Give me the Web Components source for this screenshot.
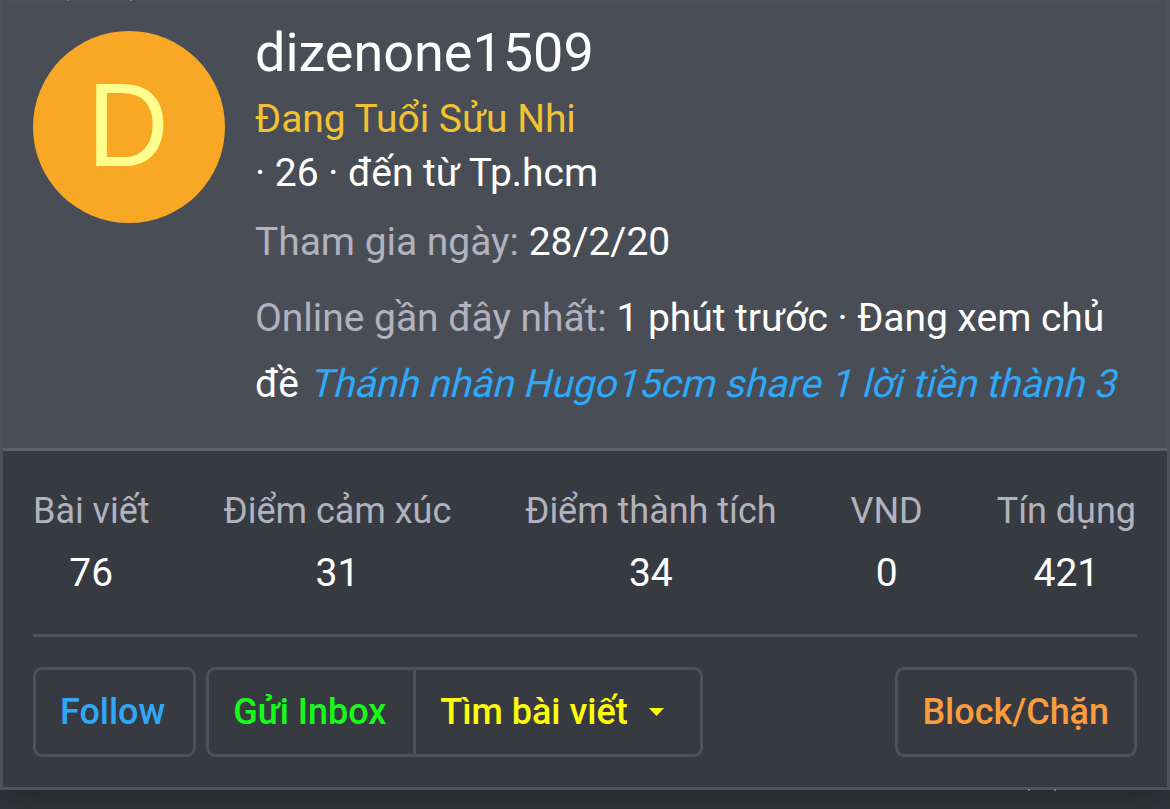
<!DOCTYPE html>
<html lang="vi">
<head>
<meta charset="UTF-8">
<title>dizenone1509</title>
<style>
  body {
    margin: 0;
    height: 809px;
    overflow: hidden;
    background: #33363b;
    font-family: Roboto, "Noto Sans", sans-serif;
    letter-spacing: -0.03px;
    color: #fff;
  }
</style>
</head>
<body>

<member-tooltip>
  <member-header slot="header" name="dizenone1509" initial="D">
    <span slot="title">Đang Tuổi Sửu Nhi</span>
    <span slot="blurb">· 26 · đến từ Tp.hcm</span>
    <member-line label="Tham gia ngày:">28/2/20</member-line>
    <member-line label="Online gần đây nhất:">1 phút trước · Đang xem chủ đề <topic-link>Thánh nhân Hugo15cm share 1 lời tiền thành 3</topic-link></member-line>
  </member-header>
  <member-stat slot="stats" label="Bài viết">76</member-stat>
  <member-stat slot="stats" label="Điểm cảm xúc">31</member-stat>
  <member-stat slot="stats" label="Điểm thành tích">34</member-stat>
  <member-stat slot="stats" label="VND">0</member-stat>
  <member-stat slot="stats" label="Tín dụng">421</member-stat>
  <action-group slot="actions">
    <action-button color="#2fa8f8" pad="28">Follow</action-button>
  </action-group>
  <action-group slot="actions">
    <action-button color="#17fb1b" pad="27">Gửi Inbox</action-button>
    <action-button color="#fdfd08" pad="25" menu>Tìm bài viết</action-button>
  </action-group>
  <action-group slot="actions" class="end">
    <action-button color="#fd9c3d" pad="25">Block/Chặn</action-button>
  </action-group>
</member-tooltip>

<script>
  class MemberTooltip extends HTMLElement {
    constructor() {
      super();
      this.attachShadow({ mode: 'open' }).innerHTML = `
        <style>
          :host {
            display: flex;
            flex-direction: column;
            position: relative;
            box-sizing: border-box;
            height: 790px;
            border: 3px solid #4e5159;
            border-top-width: 1px;
            background: #383a42;
            box-shadow: 0 15px 30px -4px rgba(30, 38, 36, 0.75);
          }
          .stats {
            display: flex;
            justify-content: space-between;
            height: 186px;
            box-sizing: border-box;
            padding-top: 39px;
            margin: 0 31px 0 30px;
          }
          .rule {
            height: 3px;
            margin: -3px 30px 0;
            background: #4e5159;
          }
          .actions {
            display: flex;
            gap: 10px;
            margin: 30px 30px 0;
          }
          ::slotted(.end) {
            margin-left: auto;
          }
          /* tips of the page text hidden behind the card */
          .peek {
            position: absolute;
            width: 2px;
            height: 2px;
            background: #74777b;
          }
          .peek.top {
            top: -1px;
            height: 1px;
          }
          .peek.bottom {
            bottom: -4px;
          }
        </style>
        <slot name="header"></slot>
        <div class="stats"><slot name="stats"></slot></div>
        <div class="rule"></div>
        <div class="actions"><slot name="actions"></slot></div>
        <i class="peek top" style="left: 64px"></i>
        <i class="peek top" style="left: 127px"></i>
        <i class="peek bottom" style="left: 1025px"></i>
        <i class="peek bottom" style="left: 1051px"></i>
      `;
    }
  }

  class MemberHeader extends HTMLElement {
    constructor() {
      super();
      this.attachShadow({ mode: 'open' }).innerHTML = `
        <style>
          :host {
            display: flex;
            gap: 30px;
            box-sizing: border-box;
            height: 450px;
            padding: 30px 30px 0;
            background: #494d55;
            border-bottom: 3px solid #5d6069;
          }
          .avatar {
            flex: none;
            width: 192px;
            height: 192px;
            border-radius: 50%;
            background: #f9a825;
            color: #ffff8d;
            font: 118.5px/188px "Liberation Sans", sans-serif;
            text-align: center;
          }
          .avatar span {
            display: inline-block;
            margin-right: 2px;
            transform: scaleX(0.955);
          }
          .info {
            flex: 1;
            min-width: 0;
            font-size: 39px;
            line-height: 54px;
          }
          .name {
            font-size: 54px;
            line-height: 43px;
            margin-bottom: 18px;
          }
          .title {
            color: #f1c232;
          }
          .blurb {
            margin-bottom: 9px;
          }
        </style>
        <div class="avatar"><span>${this.getAttribute('initial')}</span></div>
        <div class="info">
          <div class="name">${this.getAttribute('name')}</div>
          <div class="title"><slot name="title"></slot></div>
          <div class="blurb"><slot name="blurb"></slot></div>
          <slot></slot>
        </div>
      `;
    }
  }

  class MemberLine extends HTMLElement {
    constructor() {
      super();
      this.attachShadow({ mode: 'open' }).innerHTML = `
        <style>
          :host {
            display: block;
            line-height: 66px;
            margin-bottom: 10px;
          }
          .label {
            color: #b0b3bd;
          }
        </style>
        <span class="label">${this.getAttribute('label')}</span>
        <slot></slot>
      `;
    }
  }

  class TopicLink extends HTMLElement {
    constructor() {
      super();
      // slanted upright face, keeps the regular advance widths
      this.attachShadow({ mode: 'open' }).innerHTML = `
        <style>
          :host {
            display: inline-block;
            color: #2fa8f8;
            letter-spacing: -0.05px;
            white-space: nowrap;
            transform: skewX(-14deg);
            transform-origin: 0 46px;
          }
        </style>
        <slot></slot>
      `;
    }
  }

  class MemberStat extends HTMLElement {
    constructor() {
      super();
      this.attachShadow({ mode: 'open' }).innerHTML = `
        <style>
          :host {
            display: block;
            text-align: center;
            white-space: nowrap;
          }
          .label {
            font-size: 36px;
            line-height: 42px;
            margin-bottom: 14px;
            color: #b0b3bd;
          }
          .value {
            font-size: 39px;
            line-height: 54px;
          }
        </style>
        <div class="label">${this.getAttribute('label')}</div>
        <div class="value"><slot></slot></div>
      `;
    }
  }

  class ActionGroup extends HTMLElement {
    constructor() {
      super();
      this.attachShadow({ mode: 'open' }).innerHTML = `
        <style>
          :host {
            display: flex;
            box-sizing: border-box;
            height: 90px;
            border: 3px solid #4e5159;
            border-radius: 9px;
          }
          ::slotted(:not(:first-child)) {
            border-left: 3px solid #4e5159;
          }
        </style>
        <slot></slot>
      `;
    }
  }

  class ActionButton extends HTMLElement {
    constructor() {
      super();
      const pad = this.getAttribute('pad') || '24';
      const caret = this.hasAttribute('menu')
        ? '<svg width="15" height="8" viewBox="0 0 15 8"><path d="M0 0h15L7.5 8z" fill="currentColor"/></svg>'
        : '';
      this.attachShadow({ mode: 'open' }).innerHTML = `
        <style>
          :host {
            display: flex;
            align-items: center;
            padding: 0 ${pad}px 0 24px;
            color: ${this.getAttribute('color')};
            font-size: 36px;
            font-weight: 500;
            line-height: 84px;
            white-space: nowrap;
            cursor: pointer;
          }
          svg {
            margin: 0 11px 0 21px;
          }
        </style>
        <slot></slot>${caret}
      `;
    }
  }

  customElements.define('member-tooltip', MemberTooltip);
  customElements.define('member-header', MemberHeader);
  customElements.define('member-line', MemberLine);
  customElements.define('topic-link', TopicLink);
  customElements.define('member-stat', MemberStat);
  customElements.define('action-group', ActionGroup);
  customElements.define('action-button', ActionButton);
</script>
</body>
</html>
